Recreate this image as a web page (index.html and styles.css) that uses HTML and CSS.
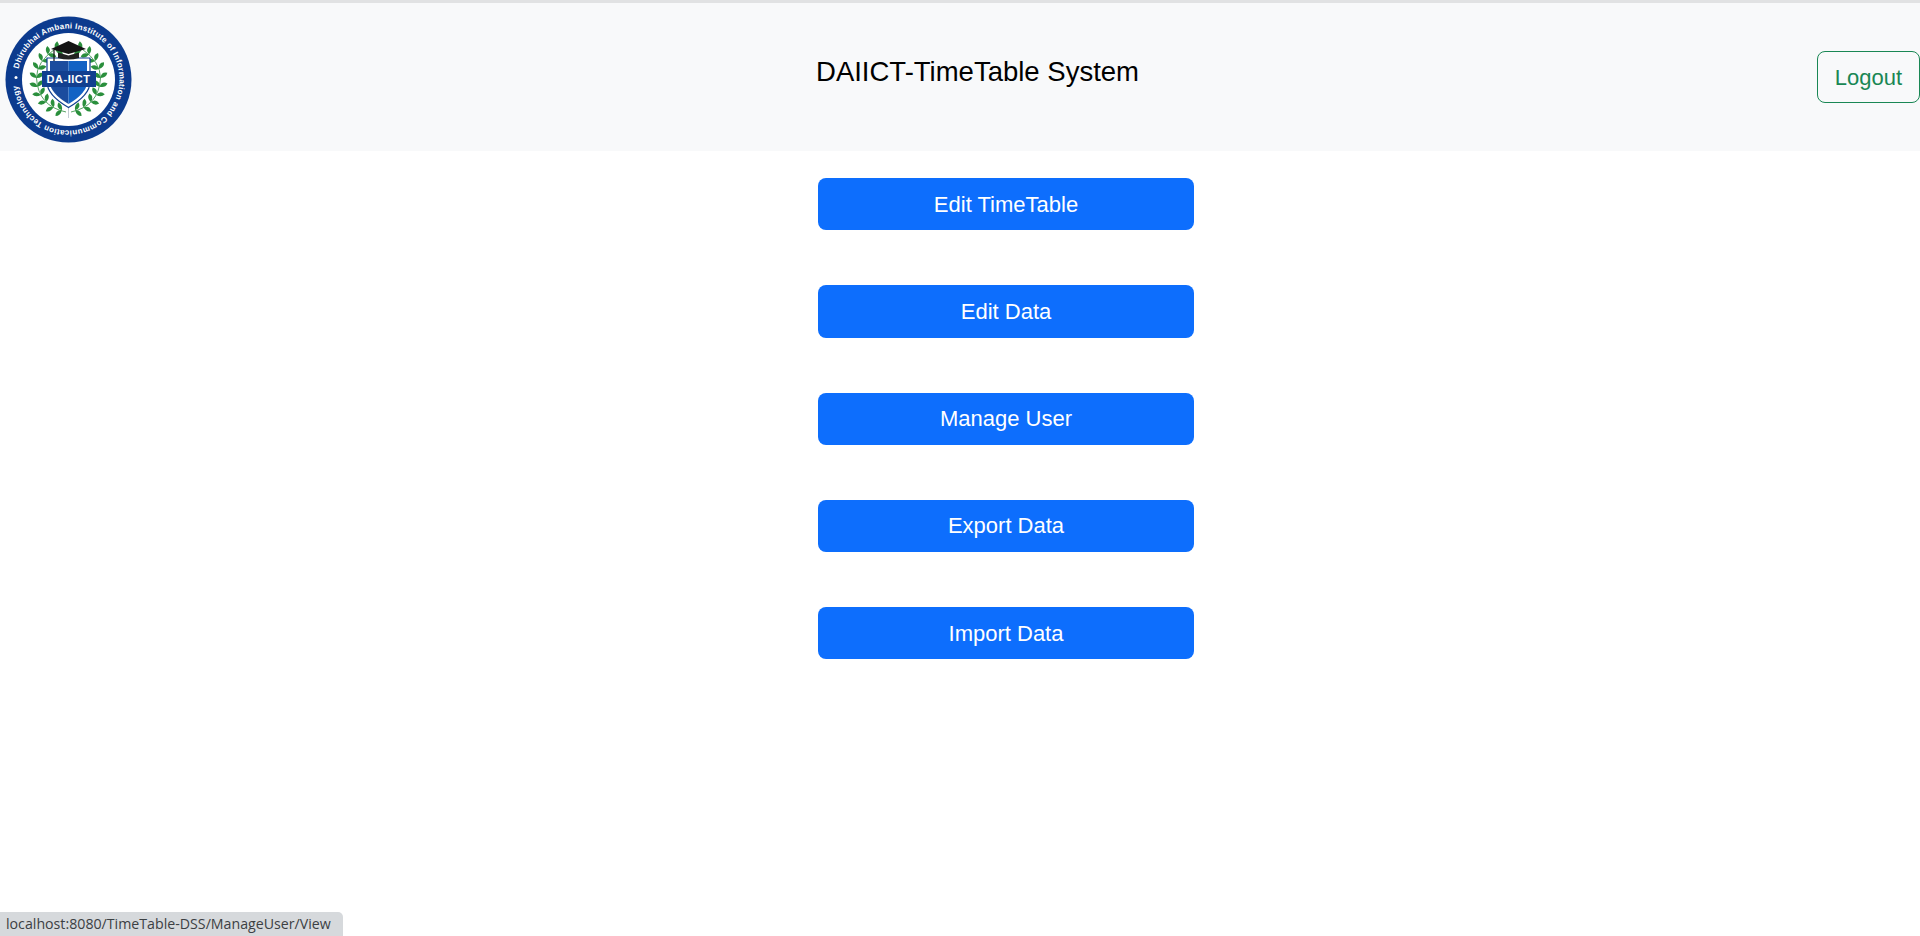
FILE: index.html
```html
<!DOCTYPE html>
<html lang="en">
<head>
<meta charset="utf-8">
<title>DAIICT-TimeTable System</title>
<link rel="stylesheet" href="styles.css">
</head>
<body>
<header class="topbar">
  <svg class="logo" viewBox="0 0 127 127" aria-label="DA-IICT logo">
    <defs>
      <path id="ring" d="M12.5 63.5 A51 51 0 1 1 114.5 63.5 A51 51 0 1 1 12.5 63.5"/>
      <g id="leafPair">
        <path d="M0 0 Q-6 0 -7 -5 Q-1 -6.5 0 0Z"/>
        <path d="M0 0 Q6 0 7 -5 Q1 -6.5 0 0Z"/>
      </g>
      <g id="wreathSide">
        <path class="stem" d="M61 96 Q33 90 31.5 62 Q31.5 46 50 33"/>
        <use href="#leafPair" transform="translate(56.8 94.3) rotate(-78)"/>
        <use href="#leafPair" transform="translate(48.5 91.3) rotate(-62)"/>
        <use href="#leafPair" transform="translate(41.3 86) rotate(-46)"/>
        <use href="#leafPair" transform="translate(35.8 79) rotate(-30)"/>
        <use href="#leafPair" transform="translate(32.5 70.7) rotate(-14)"/>
        <use href="#leafPair" transform="translate(31.5 61.9) rotate(2)"/>
        <use href="#leafPair" transform="translate(33.1 53.1) rotate(18)"/>
        <use href="#leafPair" transform="translate(37 45.1) rotate(34)"/>
        <use href="#leafPair" transform="translate(42.9 38.5) rotate(50)"/>
        <use href="#leafPair" transform="translate(50.5 33.8) rotate(66)"/>
      </g>
    </defs>
    <circle cx="63.5" cy="63.5" r="63" fill="#0c3b8e"/>
    <circle cx="63.5" cy="63.5" r="46.5" fill="#fff"/>
    <circle cx="11" cy="61.5" r="1.5" fill="#fff"/>
    <text class="ring-text"><textPath href="#ring" startOffset="10.7" textLength="303" lengthAdjust="spacing">Dhirubhai Ambani Institute of Information and Communication Technology</textPath></text>
    <g class="leaves">
      <use href="#wreathSide"/>
      <use href="#wreathSide" transform="translate(127 0) scale(-1 1)"/>
    </g>
    <path d="M63.5 90 V102" stroke="#c4ccd4" stroke-width="1"/>
    <path d="M42 42 H85 V66 Q85 79 63.5 91.5 Q42 79 42 66 Z" fill="#fff" stroke="#12408f" stroke-width="1.2"/>
    <path d="M45 45 H63.5 V88 Q45 77 45 66 Z" fill="#1b4c9e"/>
    <path d="M63.5 45 H82 V66 Q82 77 63.5 88 Z" fill="#1262c4"/>
    <path d="M63.5 25 L81 33 L63.5 38 L46 33 Z" fill="#141414"/>
    <path d="M53 36.5 V42 Q63.5 45 74 42 V36.5 L63.5 39.5 Z" fill="#222"/>
    <path d="M49 34 V45" stroke="#141414" stroke-width="1.2" fill="none"/>
    <rect x="37" y="55" width="54" height="16" fill="#123f8f"/>
    <text x="63.5" y="67" class="badge-text">DA-IICT</text>
  </svg>
  <h1 class="title">DAIICT-TimeTable System</h1>
  <a class="logout" href="#">Logout</a>
</header>
<main class="menu">
  <a class="menu-btn" href="#">Edit TimeTable</a>
  <a class="menu-btn" href="#">Edit Data</a>
  <a class="menu-btn" href="#">Manage User</a>
  <a class="menu-btn" href="#">Export Data</a>
  <a class="menu-btn" href="#">Import Data</a>
</main>
<div class="status">localhost:8080/TimeTable-DSS/ManageUser/View</div>
</body>
</html>
```
FILE: styles.css
```css
* { box-sizing: border-box; }
html, body { margin: 0; height: 100%; }
body {
  background: #fff;
  font-family: "Liberation Sans", Arial, sans-serif;
  overflow: hidden;
}
.topbar {
  display: flex;
  align-items: flex-start;
  justify-content: space-between;
  height: 151px;
  padding: 13px 0 0 5px;
  background: #f8f9fa;
  border-top: 3px solid #e1e2e3;
}
.logo { width: 127px; height: 127px; flex: none; }
.ring-text { font: 700 8px "Liberation Sans", Arial, sans-serif; fill: #fff; }
.badge-text { font: 700 11px "Liberation Sans", Arial, sans-serif; fill: #fff; text-anchor: middle; letter-spacing: .5px; }
.stem { fill: none; stroke: #2a8a3a; stroke-width: .8; }
.leaves { fill: #2a8f3c; }
.title {
  margin: 38px 0 0 6px;
  font-size: 27.5px;
  font-weight: 400;
  line-height: 36px;
  color: #000;
}
.logout {
  margin-top: 35px;
  width: 103px;
  height: 52px;
  display: flex;
  align-items: center;
  justify-content: center;
  border: 1px solid #198754;
  border-radius: 8px;
  color: #198754;
  font-size: 22px;
  padding-top: 1px;
  text-decoration: none;
}
.menu {
  display: flex;
  flex-direction: column;
  gap: 55px;
  width: 376px;
  margin: 27px 0 0 818px;
}
.menu-btn {
  height: 52.25px;
  display: flex;
  align-items: center;
  justify-content: center;
  padding-top: 1px;
  background: #0d6efd;
  border-radius: 8px;
  color: #fff;
  font-size: 22px;
  text-decoration: none;
}
.status {
  position: fixed;
  left: 0;
  bottom: 0;
  width: 343px;
  height: 24px;
  padding: 3px 0 0 6px;
  background: #d6d9dc;
  border-top-right-radius: 5px;
  color: #3c4043;
  font: 14.2px/18px "Open Sans", sans-serif;
  white-space: nowrap;
}
```
